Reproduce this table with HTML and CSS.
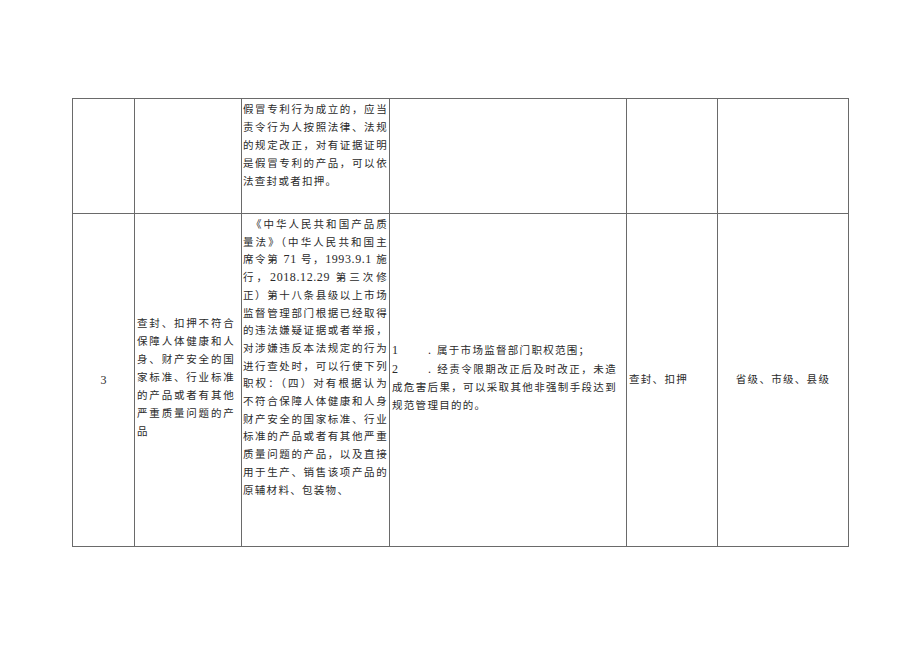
FILE: index.html
```html
<!DOCTYPE html>
<html lang="zh-CN">
<head>
<meta charset="utf-8">
<title>行政强制事项</title>
<link rel="stylesheet" href="styles.css">
</head>
<body>
<div class="page">
  <table class="grid">
    <colgroup>
      <col class="c1"><col class="c2"><col class="c3"><col class="c4"><col class="c5"><col class="c6">
    </colgroup>
    <tr class="r1">
      <td></td>
      <td></td>
      <td class="law">
        <div class="ln">假冒专利行为成立的，应当</div>
        <div class="ln">责令行为人按照法律、法规</div>
        <div class="ln">的规定改正，对有证据证明</div>
        <div class="ln">是假冒专利的产品，可以依</div>
        <div class="ln last">法查封或者扣押。</div>
      </td>
      <td></td>
      <td></td>
      <td></td>
    </tr>
    <tr class="r2">
      <td class="num">3</td>
      <td class="item">
        <div class="ln">查封、扣押不符合</div>
        <div class="ln">保障人体健康和人</div>
        <div class="ln">身、财产安全的国</div>
        <div class="ln">家标准、行业标准</div>
        <div class="ln">的产品或者有其他</div>
        <div class="ln">严重质量问题的产</div>
        <div class="ln last">品</div>
      </td>
      <td class="law">
        <div class="ln first">《中华人民共和国产品质</div>
        <div class="ln">量法》（中华人民共和国主</div>
        <div class="ln words">席令第 <span class="lat">71</span> 号，<span class="lat">1993.9.1</span> 施</div>
        <div class="ln words">行，<span class="lat">2018.12.29</span> 第三次修</div>
        <div class="ln">正）第十八条县级以上市场</div>
        <div class="ln">监督管理部门根据已经取得</div>
        <div class="ln">的违法嫌疑证据或者举报，</div>
        <div class="ln">对涉嫌违反本法规定的行为</div>
        <div class="ln">进行查处时，可以行使下列</div>
        <div class="ln">职权：（四）对有根据认为</div>
        <div class="ln">不符合保障人体健康和人身</div>
        <div class="ln">财产安全的国家标准、行业</div>
        <div class="ln">标准的产品或者有其他严重</div>
        <div class="ln">质量问题的产品，以及直接</div>
        <div class="ln">用于生产、销售该项产品的</div>
        <div class="ln last">原辅材料、包装物、</div>
      </td>
      <td class="cond">
        <div class="ln last"><span class="no">1</span><span class="dot">.</span>属于市场监督部门职权范围；</div>
        <div class="ln"><span class="no">2</span><span class="dot">.</span>经责令限期改正后及时改正，未造</div>
        <div class="ln">成危害后果，可以采取其他非强制手段达到</div>
        <div class="ln last">规范管理目的的。</div>
      </td>
      <td class="kind">查封、扣押</td>
      <td class="level">省级、市级、县级</td>
    </tr>
  </table>
</div>
</body>
</html>
```

FILE: styles.css
```css
html, body {
  margin: 0;
  padding: 0;
  background: #ffffff;
}

.page {
  padding: 98px 0 0 72px;
  font-family: "Liberation Serif", "Noto Sans CJK SC", serif;
  color: #2a2a2a;
  font-size: 10.5px;
}

.grid {
  border-collapse: collapse;
  table-layout: fixed;
  width: 776px;
}

.c1 { width: 62px; }
.c2 { width: 107px; }
.c3 { width: 148px; }
.c4 { width: 237px; }
.c5 { width: 91px; }
.c6 { width: 131px; }

.grid td {
  border: 1px solid #6a6a6a;
  padding: 0;
  vertical-align: middle;
  line-height: 18px;
  letter-spacing: 1.3px;
}

.r1 { height: 115px; }
.r2 { height: 333px; }

.ln {
  white-space: nowrap;
  text-align: justify;
  text-align-last: justify;
}

.ln.last {
  text-align-last: left;
}

.ln.words {
  text-justify: inter-word;
}

.lat {
  font-size: 12px;
  letter-spacing: 0.6px;
}

.grid td.law {
  vertical-align: top;
  padding: 2px 1px 0 1px;
  line-height: 17.7px;
}

.r1 td.law {
  line-height: 18px;
}

.ln.first {
  text-indent: 8px;
}

.grid td.num {
  text-align: center;
  font-size: 12px;
  letter-spacing: 0;
}

.grid td.item {
  padding: 0 6px 4px 2px;
}

.grid td.cond {
  padding: 0 9px 4px 2px;
}

.no {
  display: inline-block;
  width: 36px;
  letter-spacing: 0;
  font-size: 12px;
}

.dot {
  display: inline-block;
  width: 9px;
  font-size: 12px;
  letter-spacing: 0;
}

.grid td.kind {
  padding: 0 0 0 2px;
}

.grid td.level {
  text-align: center;
}
```
